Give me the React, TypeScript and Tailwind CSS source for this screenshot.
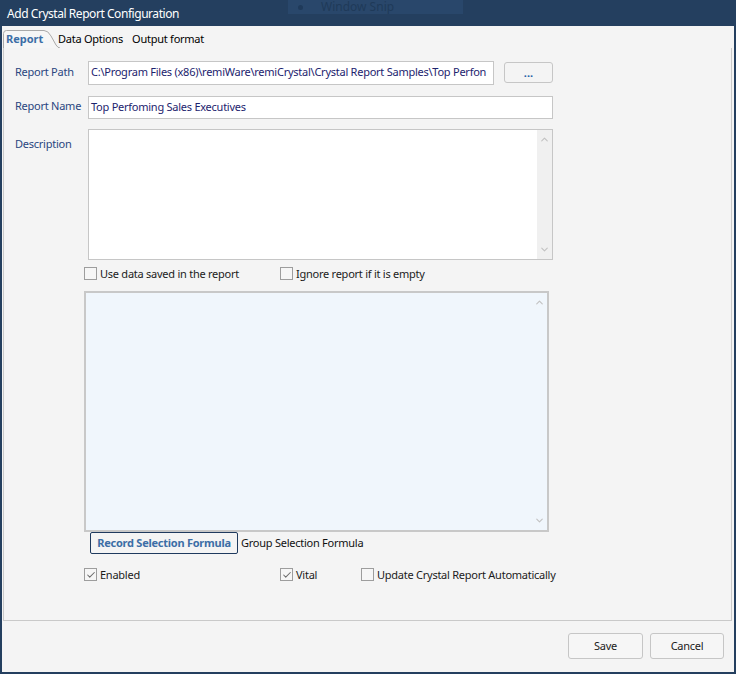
import { ChevronDown, ChevronUp, Check } from 'lucide-react';

const FONT = "font-['Noto_Sans',sans-serif]";

function Checkbox({ label, checked }: { label: string; checked?: boolean }) {
  return (
    <div className="flex items-center h-[13px]">
      <div className="w-[13px] h-[13px] border border-[#9d9d9d] bg-[#f6f6f6] flex items-center justify-center">
        {checked && <Check className="w-[10px] h-[10px] text-[#6b6b6b]" strokeWidth={2.5} />}
      </div>
      <span className="ml-[3px] text-[11px] leading-[13px] text-[#1b1b1b]">{label}</span>
    </div>
  );
}

function ScrollTrack({ bg }: { bg: string }) {
  return (
    <div className={`w-[15px] h-full flex flex-col justify-between items-center py-[4px] ${bg}`}>
      <ChevronUp className="w-[11px] h-[11px] text-[#c2c2c2]" strokeWidth={2.5} />
      <ChevronDown className="w-[11px] h-[11px] text-[#c2c2c2]" strokeWidth={2.5} />
    </div>
  );
}

export default function App() {
  return (
    <div className={`w-[736px] h-[674px] bg-[#243f5f] flex flex-col px-[2px] pb-[2px] ${FONT}`}>
      {/* Title bar */}
      <div className="relative h-[26px] shrink-0 flex items-center pl-[5px] pt-[1px] text-white text-[12px] tracking-[-0.45px]">
        Add Crystal Report Configuration
        <div className="absolute left-[286px] top-0 w-[175px] h-[14px] bg-[#29476b] flex items-center">
          <span className="ml-[10px] w-[5px] h-[5px] rounded-full bg-[#1f3a5a]" />
          <span className="ml-[18px] text-[12px] leading-[14px] tracking-normal text-[#1f3a59]">Window Snip</span>
        </div>
      </div>

      <div className="flex-1 bg-[#f4f4f4] flex flex-col tracking-[-0.25px]">
        {/* Tab strip */}
        <div className="h-[22px] shrink-0 flex items-end pl-[1px] text-[11px]">
          <div className="relative h-[18px] w-[53px] flex items-center">
            <svg className="absolute inset-0" width="58" height="18" viewBox="0 0 58 18">
              <path d="M0.5 18 V3.5 Q0.5 0.5 3.5 0.5 H41 Q45 0.5 48 6 L53 15 Q55 18 57 18" fill="#f6f6f6" stroke="#a9a9a9" strokeWidth="1" />
            </svg>
            <span className="relative ml-[3px] font-bold text-[#3c6ea6] tracking-[0px]">Report</span>
          </div>
          <div className="h-[18px] flex items-center text-black">
            <span className="ml-[2px]">Data Options</span>
            <span className="ml-[9px]">Output format</span>
          </div>
        </div>

        {/* Tab page */}
        <div className="ml-[1px] mr-[2px] h-[573px] shrink-0 border-l border-r border-b border-[#c9c9c9] flex flex-col pt-[13px] text-[11px]">
          <div className="flex items-start">
            <div className="w-[84px] pl-[11px] leading-[22px] text-[#2a4680]">Report Path</div>
            <div className="w-[406px] h-[24px] bg-white border border-[#c6c6c6] px-[2px] leading-[20px] text-[#1c236e] whitespace-nowrap overflow-hidden">
              C:\Program Files (x86)\remiWare\remiCrystal\Crystal Report Samples\Top Perfon
            </div>
            <button className="ml-[10px] mt-[1px] w-[49px] h-[21px] rounded-[3px] border border-[#c6c6c6] bg-[#f4f4f4] flex items-center justify-center">
              <span className="text-[11px] leading-none font-bold text-[#1f5fa8] tracking-[0px]">...</span>
            </button>
          </div>

          <div className="flex items-start mt-[11px]">
            <div className="w-[84px] pl-[11px] leading-[20px] text-[#2a4680]">Report Name</div>
            <div className="w-[465px] h-[23px] bg-white border border-[#c6c6c6] px-[2px] leading-[20px] text-[#1c236e]">
              Top Perfoming Sales Executives
            </div>
          </div>

          <div className="flex items-start mt-[10px]">
            <div className="w-[84px] pl-[11px] mt-[7px] leading-[16px] text-[#2a4680]">Description</div>
            <div className="w-[465px] h-[131px] bg-white border border-[#c6c6c6] flex justify-end">
              <ScrollTrack bg="bg-[#f0f0f0]" />
            </div>
          </div>

          <div className="flex mt-[7px] ml-[80px]">
            <div className="w-[196px]">
              <Checkbox label="Use data saved in the report" />
            </div>
            <Checkbox label="Ignore report if it is empty" />
          </div>

          <div className="ml-[80px] mt-[11px] w-[465px] h-[241px] border-2 border-[#c8c8c8] bg-[#f0f6fc] flex justify-end">
            <ScrollTrack bg="bg-[#f0f6fc]" />
          </div>

          <div className="flex items-center ml-[86px]">
            <div className="w-[148px] h-[22px] border border-[#1f3a5e] rounded-[2px] flex items-center justify-center font-bold text-[#3c6ea6]">
              Record Selection Formula
            </div>
            <span className="ml-[3px] text-[#111]">Group Selection Formula</span>
          </div>

          <div className="flex mt-[14px] ml-[80px]">
            <div className="w-[196px]">
              <Checkbox label="Enabled" checked />
            </div>
            <div className="w-[81px]">
              <Checkbox label="Vital" checked />
            </div>
            <Checkbox label="Update Crystal Report Automatically" />
          </div>
        </div>

        {/* Dialog buttons */}
        <div className="flex justify-end gap-[7px] pr-[10px] mt-[12px] text-[11px]">
          <button className="w-[75px] h-[26px] rounded-[3px] border border-[#c6c6c6] bg-[#f6f6f6] text-[#1b1b1b]">Save</button>
          <button className="w-[74px] h-[26px] rounded-[3px] border border-[#c6c6c6] bg-[#f6f6f6] text-[#1b1b1b]">Cancel</button>
        </div>
      </div>
    </div>
  );
}
